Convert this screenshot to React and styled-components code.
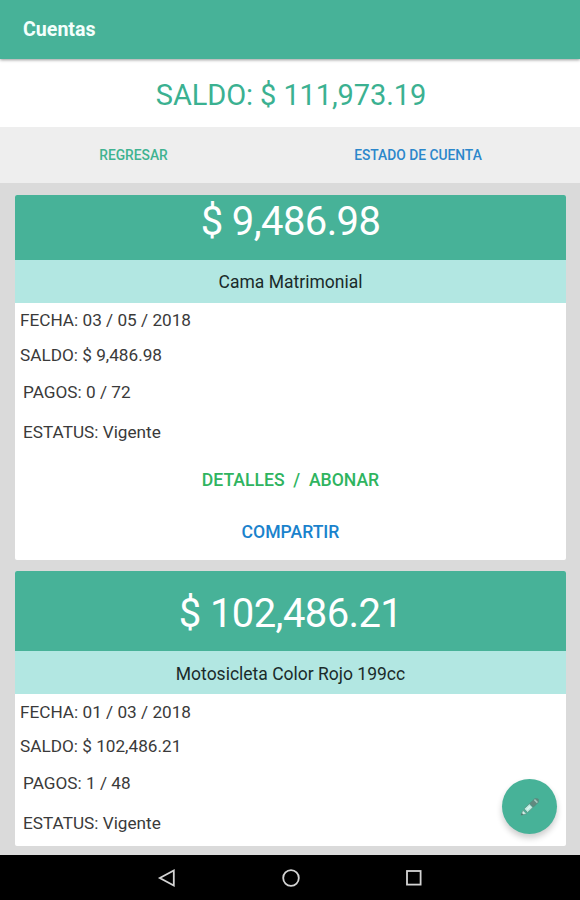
import React from 'react';
import styled, { createGlobalStyle, css } from 'styled-components';

const GlobalStyle = createGlobalStyle`
  * {
    box-sizing: border-box;
  }
  body {
    margin: 0;
    font-family: Roboto, sans-serif;
    background-color: #dadada;
  }
  button {
    font-family: inherit;
    border: none;
    background: none;
    padding: 0;
    cursor: pointer;
  }
`;

const Screen = styled.div`
  position: relative;
  display: flex;
  flex-direction: column;
  width: 580px;
  height: 900px;
  overflow: hidden;
  background-color: #dadada;
`;

const AppBar = styled.header`
  display: flex;
  align-items: center;
  flex: none;
  height: 59px;
  padding-left: 23px;
  background-color: #47b298;
  color: #f4fffc;
  font-size: 19.6px;
  font-weight: 700;
  box-shadow: 0 1px 3px rgba(0, 0, 0, 0.4);
  z-index: 1;
`;

const Total = styled.div`
  display: flex;
  align-items: center;
  justify-content: center;
  flex: none;
  height: 67.5px;
  padding: 4px 0 0 2px;
  background-color: #fff;
  color: #3bb191;
  font-size: 29px;
  letter-spacing: -0.1px;
`;

const Tabs = styled.div`
  display: grid;
  grid-template-columns: 267px 302px;
  flex: none;
  height: 56px;
  background-color: #eee;
`;

const TabButton = styled.button`
  color: ${(props) => props.$color};
  font-size: 13.8px;
  font-weight: 500;
`;

const CardList = styled.main`
  display: flex;
  flex-direction: column;
  gap: 11px;
  flex: 1;
  padding: 12.5px 14px 8px 15px;
`;

const Card = styled.article`
  flex: none;
  height: ${(props) => props.$height}px;
  border-radius: 2px;
  background-color: #fff;
  overflow: hidden;
`;

const Amount = styled.div`
  display: flex;
  align-items: center;
  justify-content: center;
  height: 80px;
  padding-top: 4px;
  background-color: #47b298;
  color: #fff;
  font-size: 40px;
  letter-spacing: -0.6px;
  ${(props) =>
    props.$compact &&
    css`
      height: 64.5px;
      padding: 0 0 11px;
    `}
`;

const Product = styled.div`
  display: flex;
  align-items: center;
  justify-content: center;
  height: 43px;
  padding-top: 2px;
  background-color: #b2e7e2;
  color: #1a2b2a;
  font-size: 17.5px;
`;

const Details = styled.div`
  display: flex;
  flex-direction: column;
`;

const Line = styled.div`
  display: flex;
  align-items: center;
  height: ${(props) => props.$height}px;
  padding-left: ${(props) => (props.$indent ? 8 : 5)}px;
  color: #3a3a3a;
  font-size: 17.2px;
`;

const Actions = styled.div`
  display: flex;
  flex-direction: column;
  align-items: center;
  padding-top: 2px;
`;

const ActionButton = styled.button`
  height: 52px;
  color: ${(props) => props.$color};
  font-size: 17.6px;
  font-weight: 500;
  white-space: pre;
`;

const Fab = styled.button`
  position: absolute;
  right: 23px;
  bottom: 66px;
  display: flex;
  align-items: center;
  justify-content: center;
  width: 55px;
  height: 55px;
  border-radius: 50%;
  background-color: #47b298;
  box-shadow: 0 4px 6px rgba(0, 0, 0, 0.2);
`;

const NavBar = styled.nav`
  display: flex;
  align-items: center;
  justify-content: center;
  gap: 99.5px;
  flex: none;
  height: 45.5px;
  padding: 1px 0 0 1px;
  background-color: #000;
  z-index: 1;
`;

const accounts = [
  {
    amount: '$ 9,486.98',
    product: 'Cama Matrimonial',
    date: '03 / 05 / 2018',
    payments: '0 / 72',
    status: 'Vigente',
    compact: true,
    actions: true,
    height: 365,
  },
  {
    amount: '$ 102,486.21',
    product: 'Motosicleta Color Rojo 199cc',
    date: '01 / 03 / 2018',
    payments: '1 / 48',
    status: 'Vigente',
    height: 275,
  },
];

const PencilIcon = () => (
  <svg width="20" height="20" viewBox="0 0 20 20">
    <path d="M1 18.3 2.8 13.2 6.6 16.8Z" fill="#d5eee7" stroke="#5e9687" strokeWidth="0.8" />
    <path d="M4 11.8 9.4 6.8 13 10.4 7.6 15.6Z" fill="#b9e8dd" stroke="#5e9687" strokeWidth="0.9" />
    <path d="M6.8 12.6 10.4 9.3" stroke="#dcf5ef" strokeWidth="1.8" />
    <path d="M9.8 6.4 15 1.6 18.2 2 18.3 5.2 13.4 10Z" fill="#62897f" stroke="#568a7c" strokeWidth="0.8" />
    <path d="M14.4 2.6 17.4 5.6" stroke="#a5c8bf" strokeWidth="1.5" />
    <path d="M1 18.3 1.8 16 3.4 17.6Z" fill="#3d7063" />
  </svg>
);

const AccountCard = ({ account }) => {
  const { amount, product, date, payments, status, compact, actions, height } =
    account;

  return (
    <Card $height={height}>
      <Amount $compact={compact}>{amount}</Amount>
      <Product>{product}</Product>
      <Details>
        <Line $height={35}>FECHA: {date}</Line>
        <Line $height={34}>SALDO: {amount}</Line>
        <Line $height={40} $indent>
          PAGOS: {payments}
        </Line>
        <Line $height={40} $indent>
          ESTATUS: {status}
        </Line>
      </Details>
      {actions && (
        <Actions>
          <ActionButton $color="#2fb45f">{'DETALLES  /  ABONAR'}</ActionButton>
          <ActionButton $color="#1a82cc">COMPARTIR</ActionButton>
        </Actions>
      )}
    </Card>
  );
};

const App = () => (
  <>
    <GlobalStyle />
    <Screen>
      <AppBar>Cuentas</AppBar>
      <Total>SALDO: $ 111,973.19</Total>
      <Tabs>
        <TabButton $color="#3fb391">REGRESAR</TabButton>
        <TabButton $color="#2b87cb">ESTADO DE CUENTA</TabButton>
      </Tabs>
      <CardList>
        {accounts.map((account) => (
          <AccountCard key={account.product} account={account} />
        ))}
      </CardList>
      <NavBar>
        <svg width="24" height="24" viewBox="0 0 24 24" fill="none">
          <path d="M4.8 12 18.8 4.4V19.6Z" stroke="#d4d4d4" strokeWidth="1.8" />
        </svg>
        <svg width="24" height="24" viewBox="0 0 24 24" fill="none">
          <circle cx="12" cy="12" r="7.8" stroke="#d4d4d4" strokeWidth="1.8" />
        </svg>
        <svg width="24" height="24" viewBox="0 0 24 24" fill="none">
          <rect x="5" y="5" width="13.6" height="13.6" stroke="#d4d4d4" strokeWidth="1.8" />
        </svg>
      </NavBar>
      <Fab aria-label="Editar">
        <PencilIcon />
      </Fab>
    </Screen>
  </>
);

export default App;
